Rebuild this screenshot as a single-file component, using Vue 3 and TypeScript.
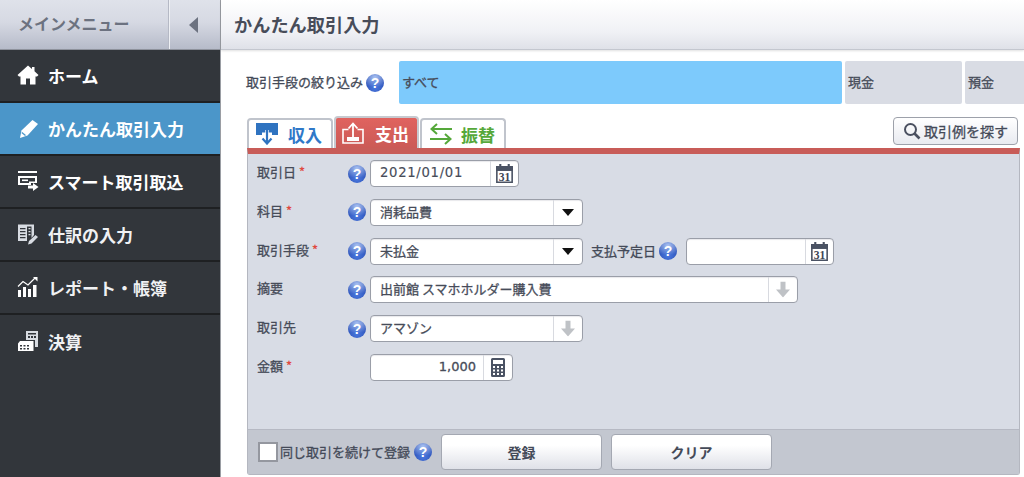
<script setup lang="ts">
const menu = [
  { key: 'home', label: 'ホーム' },
  { key: 'pen', label: 'かんたん取引入力', active: true },
  { key: 'smart', label: 'スマート取引取込' },
  { key: 'journal', label: '仕訳の入力' },
  { key: 'report', label: 'レポート・帳簿' },
  { key: 'settle', label: '決算' },
]
</script>

<template>
  <div class="page">
    <aside class="side">
      <div class="side-head">
        <span class="side-title">メインメニュー</span>
        <span class="collapse"><i class="tri"></i></span>
      </div>
      <nav class="nav">
        <a v-for="m in menu" :key="m.key" class="nav-item" :class="{ active: m.active }">
          <svg class="nav-ico" viewBox="0 0 22 22" fill="#fff">
            <path v-if="m.key === 'home'" d="M11 1.5 L15 5 V3 H17.5 V7.3 L21.5 11 L20 12.5 H18.5 V20.5 H13 V14.5 H9 V20.5 H3.5 V12.5 H2 L.5 11 Z" />
            <g v-else-if="m.key === 'pen'">
              <path d="M15.5 3 L21 7 L10.5 18.5 L3 21 L4.5 13.5 Z" />
              <path d="M4.8 15.5 L8.5 18.6" stroke="#4c96c8" stroke-width="1.3" />
            </g>
            <g v-else-if="m.key === 'smart'">
              <rect x="1" y="1" width="19" height="2" />
              <path d="M1 6 H20 V13 H14 V15 H1 Z M3 8 V13 H12 V11.5 H18 V8 Z" />
              <rect x="5" y="9.5" width="6" height="1.6" />
              <path d="M11 15.5 H16 V13 L21.5 17 L16 21 V18.5 H11 Z" />
            </g>
            <g v-else-if="m.key === 'journal'" fill="#d8dce2">
              <path d="M1 1.5 H17 V12 L14.5 15 V3.5 H10 V18 H1 Z M3 5 V6.3 H8.5 V5 Z M3 8 V9.3 H8.5 V8 Z M3 11 V12.3 H8.5 V11 Z M3 14 V15.3 H8.5 V14 Z" />
              <path d="M11.5 5 H13.5 V6.3 H11.5 Z M11.5 8 H13.5 V9.3 H11.5 Z M11.5 11 H13.5 V12.3 H11.5 Z" />
              <path d="M18.5 12 L21 14 L14.5 20.5 L11 21.5 L12 18 Z" />
            </g>
            <g v-else-if="m.key === 'report'">
              <rect x="1" y="14" width="3" height="7" />
              <rect x="6" y="11" width="3" height="10" />
              <rect x="11" y="13" width="3" height="8" />
              <rect x="16" y="9" width="3.5" height="12" />
              <path d="M1 10.5 L6 5.5 L11 9 L18 2" fill="none" stroke="#fff" stroke-width="1.2" />
              <path d="M16 1 H20.5 V5.5 Z" />
            </g>
            <g v-else>
              <path d="M9 1 H21 V17 H18 V10 H9 Z M11 3 V4.5 H19 V3 Z M11 6 V8 H13 V6 Z M14 6 V8 H16 V6 Z M17 6 V8 H19 V6 Z" fill="#d8dce2" />
              <path d="M1 13.5 L3 11 H16.5 V21 H1 Z M3 15 V16.5 H5 V15 Z M6.5 15 V16.5 H8.5 V15 Z M10 15 V16.5 H12 V15 Z M3 18 V19.5 H5 V18 Z M6.5 18 V19.5 H8.5 V18 Z M10 18 V19.5 H12 V18 Z" />
            </g>
          </svg>
          <span>{{ m.label }}</span>
        </a>
      </nav>
    </aside>

    <main class="main">
      <header class="head">かんたん取引入力</header>
      <div class="content">
        <div class="filter">
          <span class="filter-label">取引手段の絞り込み</span>
          <span class="help"></span>
          <div class="chips">
            <span class="chip on">すべて</span>
            <span class="chip cash">現金</span>
            <span class="chip dep">預金</span>
          </div>
        </div>

        <div class="tabbar">
          <div class="tab in">
            <svg width="22" height="22" viewBox="0 0 22 22">
              <path d="M0 0 H22 V12 H16 V9.5 H6 V12 H0 Z" fill="#2f73c0" />
              <path d="M11 7 V20 M6 15 L11 20.5 L16 15" fill="none" stroke="#fff" stroke-width="3.5" />
              <path d="M11 5 V20 M6.5 15.5 L11 20.5 L15.5 15.5" fill="none" stroke="#2f73c0" stroke-width="2.2" />
            </svg>
            <b>収入</b>
          </div>
          <div class="tab out">
            <svg width="22" height="22" viewBox="0 0 22 22">
              <path d="M6.5 7.5 H1 V21 H21 V7.5 H15.5" fill="none" stroke="#fff" stroke-width="1.6" />
              <rect x="5" y="15" width="12" height="4" fill="#fff" />
              <path d="M11 16 V2 M6.5 6.5 L11 1.5 L15.5 6.5" fill="none" stroke="#fff" stroke-width="1.8" />
            </svg>
            <b>支出</b>
          </div>
          <div class="tab tr">
            <svg width="22" height="22" viewBox="0 0 22 22">
              <path d="M22 6 H1.5 M7 1 L1.5 6 L7 11" fill="none" stroke="#55a83a" stroke-width="2" />
              <path d="M0 16 H20.5 M15 11 L20.5 16 L15 21" fill="none" stroke="#55a83a" stroke-width="2" />
            </svg>
            <b>振替</b>
          </div>
          <button class="search-btn">
            <svg width="18" height="18" viewBox="0 0 18 18">
              <circle cx="7.5" cy="7.5" r="5.5" fill="none" stroke="#4a5060" stroke-width="2" />
              <path d="M11.5 11.5 L16.5 16.5" stroke="#4a5060" stroke-width="2.6" />
            </svg>
            取引例を探す
          </button>
        </div>

        <section class="panel">
          <div class="form">
            <div class="row">
              <label class="lab">取引日 <em>*</em></label><span class="help"></span>
              <div class="field w-date">
                <span class="val mono">2021/01/01</span>
                <span class="addon"><svg class="cal" viewBox="0 0 18 18"><use href="#cal" /></svg></span>
              </div>
            </div>
            <div class="row">
              <label class="lab">科目 <em>*</em></label><span class="help"></span>
              <div class="field w-sel">
                <span class="val">消耗品費</span>
                <span class="addon drop"><i class="down"></i></span>
              </div>
            </div>
            <div class="row">
              <label class="lab">取引手段 <em>*</em></label><span class="help"></span>
              <div class="field w-sel">
                <span class="val">未払金</span>
                <span class="addon drop"><i class="down"></i></span>
              </div>
              <label class="lab-inline">支払予定日</label><span class="help"></span>
              <div class="field w-due">
                <span class="val"></span>
                <span class="addon"><svg class="cal" viewBox="0 0 18 18"><use href="#cal" /></svg></span>
              </div>
            </div>
            <div class="row">
              <label class="lab">摘要</label><span class="help"></span>
              <div class="field w-long">
                <span class="val">出前館 スマホホルダー購入費</span>
                <span class="addon drop"><svg class="arrow" viewBox="0 0 14 16"><use href="#arr" /></svg></span>
              </div>
            </div>
            <div class="row">
              <label class="lab">取引先</label><span class="help"></span>
              <div class="field w-sel">
                <span class="val">アマゾン</span>
                <span class="addon drop"><svg class="arrow" viewBox="0 0 14 16"><use href="#arr" /></svg></span>
              </div>
            </div>
            <div class="row">
              <label class="lab">金額 <em>*</em></label><span class="help hidden"></span>
              <div class="field w-amt">
                <span class="val right mono">1,000</span>
                <span class="addon calc">
                  <svg width="14" height="19" viewBox="0 0 14 19">
                    <path fill="#4a5263" fill-rule="evenodd" d="M1.5 0 H12.5 A1.5 1.5 0 0 1 14 1.5 V17.5 A1.5 1.5 0 0 1 12.5 19 H1.5 A1.5 1.5 0 0 1 0 17.5 V1.5 A1.5 1.5 0 0 1 1.5 0 Z M2 2 V6 H12 V2 Z M2 8 V10 H4 V8 Z M6 8 V10 H8 V8 Z M10 8 V10 H12 V8 Z M2 11.5 V13.5 H4 V11.5 Z M6 11.5 V13.5 H8 V11.5 Z M10 11.5 V13.5 H12 V11.5 Z M2 15 V17 H4 V15 Z M6 15 V17 H8 V15 Z M10 15 V17 H12 V15 Z" />
                  </svg>
                </span>
              </div>
            </div>
          </div>
          <footer class="foot">
            <span class="check"></span>
            <span class="check-label">同じ取引を続けて登録</span>
            <span class="help"></span>
            <button class="act">登録</button>
            <button class="act">クリア</button>
          </footer>
        </section>
      </div>
    </main>

    <svg width="0" height="0" class="defs">
      <defs>
        <symbol id="cal" viewBox="0 0 18 18">
          <path fill="#4a5263" fill-rule="evenodd" d="M1 2 H4 V0 H6 V2 H12 V0 H14 V2 H17 V18 H1 Z M2.5 6.5 V16.5 H15.5 V6.5 Z" />
          <rect x="1" y="2" width="16" height="4.5" fill="#4a5263" />
          <text x="9" y="15.8" text-anchor="middle" font-size="11" font-weight="700" font-family="Liberation Serif, serif" fill="#3f4656">31</text>
        </symbol>
        <symbol id="arr" viewBox="0 0 14 16">
          <path fill="#bfc2c6" d="M4.5 0 H9.5 V8 H14 L7 16 L0 8 H4.5 Z" />
        </symbol>
      </defs>
    </svg>
  </div>
</template>

<style>
html, body { margin: 0; background: #fff; }
</style>

<style scoped>
.page {
  display: flex;
  width: 1024px;
  height: 477px;
  overflow: hidden;
  background: #fff;
  font-family: "Noto Sans CJK JP", "Noto Sans", sans-serif;
  color: #444a58;
}
.defs { position: absolute; }
.side { width: 221px; box-sizing: border-box; flex: none; background: #32363b; border-right: 1px solid #9a9da3; display: flex; flex-direction: column; }
.side-head {
  height: 50px; flex: none; display: flex;
  background: linear-gradient(#dfe2ea, #d6d9e3 45%, #b6bbc9);
  border-bottom: 1px solid #8e929c;
  box-sizing: border-box;
}
.side-title { flex: 1; padding-left: 18px; font-size: 16px; font-weight: 700; line-height: 47px; color: #6c7280; }
.collapse { width: 51px; border-left: 1px solid #eef0f4; box-shadow: -1px 0 0 #b5b9c5; display: flex; align-items: center; padding-left: 19px; box-sizing: border-box; }
.tri { width: 0; height: 0; border-style: solid; border-width: 8px 9px 8px 0; border-color: transparent #6c7280 transparent transparent; }
.nav { display: flex; flex-direction: column; }
.nav-item {
  height: 53px; box-sizing: border-box; display: flex; align-items: center; gap: 9px; flex: none;
  padding: 0 0 1px 17px; color: #fff; font-size: 17px; font-weight: 700;
  border-bottom: 2px solid #1e2022; background: #32363b;
}
.nav-item.active { background: #4b96c9; }
.nav-item:nth-child(n+4) { color: #f0f1f3; }
.nav-item:nth-child(6) { border-bottom: 0; }
.nav-ico { width: 22px; height: 22px; flex: none; }
.main { flex: 1; min-width: 0; display: flex; flex-direction: column; }
.head {
  height: 50px; flex: none; box-sizing: border-box; padding-left: 13px;
  background: linear-gradient(#ffffff, #f0f1f5 65%, #dfe1e8);
  border-bottom: 1px solid #c4c7cf; font-size: 18.2px; font-weight: 700; line-height: 49px; color: #474c59;
  box-shadow: 0 1px 2px rgba(0,0,0,.12);
}
.content { flex: 1; padding: 11px 0 2px 26px; display: flex; flex-direction: column; min-height: 0; }
.filter { display: flex; align-items: center; height: 43px; flex: none; }
.filter-label { flex: none; font-size: 13px; -webkit-text-stroke: .3px currentColor; width: 120px; margin-left: -1px; white-space: nowrap; padding-bottom: 2px; }
.filter .help { margin: 0 15px 0 0; }
.chips { display: flex; gap: 3px; height: 43px; flex: none; }
.chip { font-size: 13px; -webkit-text-stroke: .3px currentColor; line-height: 41px; padding-left: 3px; background: #d9dce4; border-radius: 2px; box-sizing: border-box; color: #474c59; flex: none; }
.chip.on { width: 443px; background: #7dcafc; }
.chip.cash { width: 117px; }
.chip.dep { width: 60px; }
.tabbar { display: flex; align-items: flex-end; height: 32px; margin-top: 12px; width: 773px; flex: none; position: relative; }
.tab {
  display: flex; align-items: center; height: 30px; box-sizing: border-box;
  border: 2px solid #c0c4cc; border-bottom: 0; border-radius: 4px 4px 0 0; background: #fff;
  font-size: 17px; margin-right: 1px;
}
.tab b { font-weight: 700; }
.tab svg { flex: none; }
.tab.in { width: 86px; padding-left: 7px; color: #2f78c8; }
.tab.in b { margin-left: 10px; }
.tab.out { width: 85px; height: 32px; padding-left: 6px; background: linear-gradient(#e0635f, #cb5a56); color: #fff; border-color: #c7c9cf; }
.tab.out b { margin-left: 11px; }
.tab.tr { width: 86px; padding-left: 8px; color: #55a83a; }
.tab.tr b { margin-left: 9px; }
.search-btn {
  margin-left: auto; margin-right: 2px; align-self: flex-start; width: 125px; height: 28px; padding: 0; margin-top: 1px;
  display: flex; align-items: center; justify-content: center; gap: 3px;
  background: linear-gradient(#fff, #e8eaf0); border: 1px solid #9da1aa; border-radius: 4px;
  font: 400 14px "Noto Sans CJK JP", sans-serif; -webkit-text-stroke: .3px currentColor; color: #444a58;
}
.panel {
  flex: 1; width: 773px; box-sizing: border-box; min-height: 0; display: flex; flex-direction: column;
  background: #d8dce5; border: 1px solid #b4b7c0; border-top: 6px solid #c85c58; border-radius: 0 0 3px 3px;
}
.form { flex: 1; padding: 6px 0 0 9px; display: flex; flex-direction: column; gap: 11.8px; }
.row { display: flex; align-items: center; height: 27px; }
.lab { width: 91px; font-size: 13px; -webkit-text-stroke: .3px currentColor; padding-bottom: 4px; white-space: nowrap; color: #474c59; flex: none; }
.lab em { color: #e0483e; font-style: normal; margin-left: 0; }
.lab-inline { font-size: 13px; -webkit-text-stroke: .3px currentColor; margin-left: 8px; width: 68px; padding-bottom: 2px; white-space: nowrap; flex: none; }
.help {
  width: 18px; height: 18px; border-radius: 50%; flex: none; display: inline-flex; align-items: center; justify-content: center;
  background: radial-gradient(ellipse 80% 55% at 50% 18%, #a9c2f2, rgba(169,194,242,0) 100%), radial-gradient(circle at 50% 75%, #4a78de, #2447ad 85%);
  margin-right: 4px;
}
.help::after { content: "?"; color: #fff; font: 700 14px "Liberation Sans", sans-serif; }
.hidden { visibility: hidden; }
.lab-inline + .help { margin-right: 9px; }
.field {
  height: 27px; box-sizing: border-box; display: flex; background: #fff; border: 1px solid #9a9ea8; border-radius: 4px; flex: none;
  box-shadow: inset 0 1px 1px #e8e8ec;
}
.val { flex: 1; padding: 0 9px; font-size: 13px; -webkit-text-stroke: .3px currentColor; line-height: 24px; white-space: nowrap; color: #474c59; }
.mono { font-family: "DejaVu Sans", sans-serif; letter-spacing: .7px; -webkit-text-stroke: .15px currentColor; font-size: 13.2px; }
.right { text-align: right; padding-right: 7px; letter-spacing: 0; -webkit-text-stroke: .3px currentColor; font-size: 13px; }
.addon { width: 27px; flex: none; border-left: 1px solid #d8dae0; display: flex; align-items: center; justify-content: center; }
.drop { width: 28px; }
.calc { width: 28px; }
.cal { width: 19px; height: 19px; }
.arrow { width: 14px; height: 17px; }
.down { width: 0; height: 0; margin-top: 1px; border-style: solid; border-width: 7px 6px 0 6px; border-color: #111 transparent transparent transparent; }
.w-date { width: 149px; }
.w-sel { width: 213px; }
.w-due { width: 148px; }
.w-long { width: 428px; }
.w-amt { width: 143px; }
.foot {
  height: 45px; flex: none; box-sizing: border-box; display: flex; align-items: center; padding-left: 10px;
  background: #c3c7d0; border-top: 1px solid #b6b9c3;
}
.check { width: 20px; height: 20px; box-sizing: border-box; background: #fff; border: 2px solid #94979f; flex: none; }
.check-label { font-size: 13px; -webkit-text-stroke: .3px currentColor; margin-left: 2px; white-space: nowrap; width: 133px; padding-bottom: 2px; }
.foot .help { margin-right: 0; margin-left: 1px; }
.act {
  width: 161px; height: 36px; margin-left: 9px; padding: 0; background: linear-gradient(#fff 30%, #dfe1e8);
  border: 1px solid #a4a8b2; border-radius: 4px;
  font: 700 14px "Noto Sans CJK JP", sans-serif; color: #444a58;
}
</style>
